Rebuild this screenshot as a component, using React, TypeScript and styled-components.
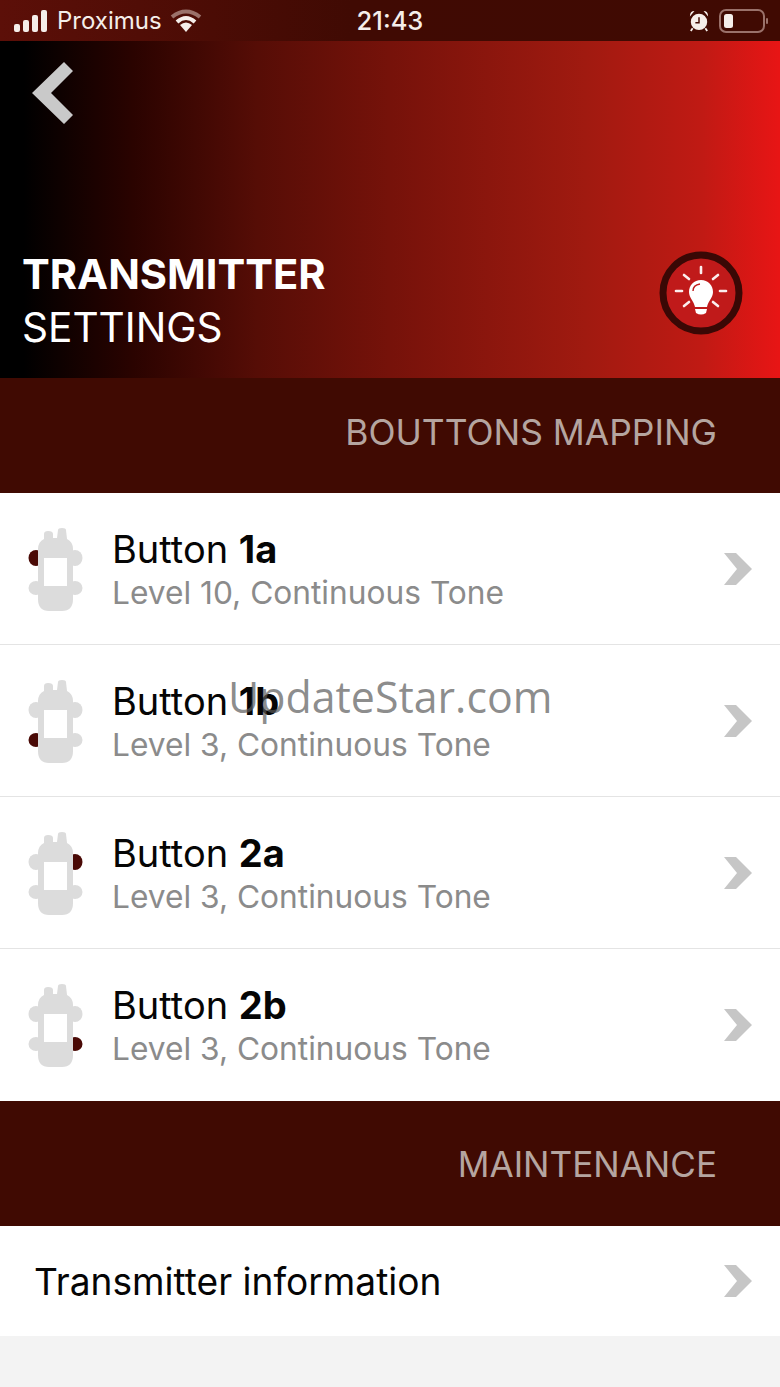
import React, { FC } from "react";
import styled, { createGlobalStyle } from "styled-components";

const GlobalStyle = createGlobalStyle`
  html, body {
    margin: 0;
    padding: 0;
    background: #f3f3f3;
  }
  * {
    box-sizing: border-box;
  }
`;

const Page = styled.div`
  position: relative;
  width: 780px;
  height: 1387px;
  overflow: hidden;
  background: #f3f3f3;
  font-family: Inter, "Liberation Sans", sans-serif;
`;

const StatusBar = styled.div`
  height: 41px;
  display: flex;
  align-items: center;
  justify-content: space-between;
  padding: 0 12px 0 14px;
  background: linear-gradient(90deg, #5c0f08 0%, #400a03 45%, #400a02 100%);
  color: #f5eeea;
`;

const StatusLeft = styled.div`
  width: 298px;
  display: flex;
  align-items: center;
  gap: 8px;
  font-size: 24px;
`;

const StatusTime = styled.div`
  font-size: 25.5px;
  font-weight: 500;
`;

const StatusRight = styled.div`
  width: 300px;
  display: flex;
  align-items: center;
  justify-content: flex-end;
  gap: 10px;
`;

const Hero = styled.div`
  height: 337px;
  display: flex;
  flex-direction: column;
  justify-content: space-between;
  padding: 21px 37px 24px 22px;
  background: linear-gradient(
    90deg,
    #000 0%,
    #000 3%,
    #2a0300 17%,
    #560d06 33%,
    #76120a 50%,
    #a01a10 75%,
    #c01a14 90%,
    #e81515 100%
  );
`;

const BackWrap = styled.div`
  margin-left: 10px;
`;

const HeroBottom = styled.div`
  display: flex;
  align-items: flex-end;
  justify-content: space-between;
`;

const LampWrap = styled.div`
  display: flex;
  margin-bottom: 19px;
`;

const HeroTitle = styled.div`
  color: #fff;
  font-size: 40.6px;
  line-height: 53px;
`;

const HeroStrong = styled.div`
  font-size: 41.6px;
  font-weight: 700;
`;

const Band = styled.div<{ $height: number; $lift: number; $size: number }>`
  height: ${(p) => p.$height}px;
  display: flex;
  align-items: center;
  justify-content: flex-end;
  padding-right: 63px;
  padding-bottom: ${(p) => p.$lift}px;
  background: #400a02;
  color: #b5a5a0;
  font-size: ${(p) => p.$size}px;
`;

const Row = styled.div`
  height: 152px;
  display: flex;
  align-items: center;
  padding: 0 28px;
  background: #fff;
  border-bottom: 1px solid #e4e4e4;
  &:last-child {
    border-bottom: 0;
  }
`;

const RowText = styled.div`
  flex: 1;
  margin-left: 27px;
  padding-top: 3px;
`;

const RowTitle = styled.div`
  color: #050505;
  font-size: 38px;
  line-height: 44px;
  b {
    font-weight: 700;
  }
`;

const RowSub = styled.div`
  color: #8b8b8b;
  font-size: 31.7px;
  line-height: 43px;
`;

const InfoRow = styled.div`
  height: 110px;
  display: flex;
  align-items: center;
  justify-content: space-between;
  padding: 0 28px 0 34px;
  background: #fff;
  color: #050505;
  font-size: 37.1px;
`;

const Watermark = styled.div`
  position: absolute;
  left: 228px;
  top: 671px;
  color: rgba(90, 90, 90, 0.7);
  font-family: "Open Sans", sans-serif;
  font-size: 42.9px;
  line-height: 52px;
`;

type Side = "tl" | "bl" | "tr" | "br";

const Transmitter: FC<{ side: Side }> = ({ side }) => {
  const dark = "#4a0a06";
  const grey = "#dcdcdc";
  return (
    <svg width="57" height="84" viewBox="0 0 57 84">
      <ellipse cx="8" cy="31" rx="7.5" ry="8" fill={side === "tl" ? dark : grey} />
      <ellipse cx="8" cy="61" rx="7.5" ry="7" fill={side === "bl" ? dark : grey} />
      <ellipse cx="47" cy="31" rx="7.5" ry="8" fill={side === "tr" ? dark : grey} />
      <ellipse cx="47" cy="61" rx="7.5" ry="7" fill={side === "br" ? dark : grey} />
      <path
        d="M10 22 Q10 15 16 12 L16 7 Q16 4 20 4 Q25 4 25 7 L25 11 L29 11 L30 3 Q30 1 34 1 Q38 1 38 3 L39 12 Q45 15 45 22 L45 72 Q45 84 34 84 L21 84 Q10 84 10 72 Z"
        fill={grey}
      />
      <rect x="16" y="31" width="23" height="28" fill="#fff" />
    </svg>
  );
};

const Chevron: FC = () => (
  <svg width="28" height="32" viewBox="0 0 28 32">
    <path d="M0 0 L12 0 L28 16 L12 32 L0 32 L13 16 Z" fill="#c6c6c6" />
  </svg>
);

const Signal: FC = () => (
  <svg width="35" height="22" viewBox="0 0 35 22" fill="#f5eeea">
    <rect x="0" y="14" width="6" height="8" rx="2" />
    <rect x="9" y="10" width="6" height="12" rx="2" />
    <rect x="18" y="5" width="6" height="17" rx="2" />
    <rect x="27" y="0" width="6" height="22" rx="2" />
  </svg>
);

const Wifi: FC = () => (
  <svg width="32" height="24" viewBox="0 0 32 24" fill="none">
    <path d="M2 8 Q16 -3 30 8" stroke="#9a716a" strokeWidth="4" />
    <path d="M7 13 Q16 5 25 13" stroke="#f5eeea" strokeWidth="4" />
    <path d="M10 16 Q16 11 22 16 L16 23 Z" fill="#f5eeea" />
  </svg>
);

const Alarm: FC = () => (
  <svg width="20" height="22" viewBox="0 0 22 24" fill="#f5eeea">
    <circle cx="11" cy="13" r="9" />
    <path d="M1 7 Q1 1 6 1 Z M21 7 Q21 1 16 1 Z" />
    <path d="M11 8 L11 14 L7 14" stroke="#400a02" strokeWidth="1.6" fill="none" />
    <path d="M4 20 L2 23 M18 20 L20 23" stroke="#f5eeea" strokeWidth="2" />
  </svg>
);

const Battery: FC = () => (
  <svg width="49" height="24" viewBox="0 0 49 24" fill="none">
    <rect x="1" y="1" width="44" height="22" rx="6" stroke="#9a716a" strokeWidth="2" />
    <rect x="5" y="5" width="9" height="14" rx="2.5" fill="#f5eeea" />
    <rect x="47" y="9" width="2" height="6" rx="1" fill="#9a716a" />
  </svg>
);

const BackArrow: FC = () => (
  <svg width="42" height="62" viewBox="0 0 42 62">
    <path d="M32 0 L41 9 L19 31 L41 53 L32 62 L0 31 Z" fill="#c9c9c9" />
  </svg>
);

const LampButton: FC = () => (
  <svg width="84" height="84" viewBox="0 0 84 84">
    <circle cx="42" cy="42" r="38" fill="#c01a1a" stroke="#3a0805" strokeWidth="7" />
    <g stroke="#fbeeee" strokeWidth="2.6" strokeLinecap="round">
      <path d="M42 16 L42 22" />
      <path d="M25 24 L30 28" />
      <path d="M59 24 L54 28" />
      <path d="M17 40 L23 40" />
      <path d="M61 40 L67 40" />
      <path d="M25 55 L30 51" />
      <path d="M59 55 L54 51" />
    </g>
    <path
      d="M42 29 C35 29 30 34 30 41 C30 47 35 50 36 56 L48 56 C49 50 54 47 54 41 C54 34 49 29 42 29 Z"
      fill="#fff"
    />
    <path d="M36 58 L48 58 L47 62 Q42 65 37 62 Z" fill="#fff" />
    <path d="M34 40 Q34 34 41 33" stroke="#c01a1a" strokeWidth="1.4" fill="none" />
  </svg>
);

const buttons: { name: string; id: string; sub: string; side: Side }[] = [
  { name: "Button", id: "1a", sub: "Level 10, Continuous Tone", side: "tl" },
  { name: "Button", id: "1b", sub: "Level 3, Continuous Tone", side: "bl" },
  { name: "Button", id: "2a", sub: "Level 3, Continuous Tone", side: "tr" },
  { name: "Button", id: "2b", sub: "Level 3, Continuous Tone", side: "br" },
];

const App: FC = () => (
  <Page>
    <GlobalStyle />
    <StatusBar>
      <StatusLeft>
        <Signal />
        <span>Proximus</span>
        <Wifi />
      </StatusLeft>
      <StatusTime>21:43</StatusTime>
      <StatusRight>
        <Alarm />
        <Battery />
      </StatusRight>
    </StatusBar>
    <Hero>
      <BackWrap>
        <BackArrow />
      </BackWrap>
      <HeroBottom>
        <HeroTitle>
          <HeroStrong>TRANSMITTER</HeroStrong>
          SETTINGS
        </HeroTitle>
        <LampWrap>
          <LampButton />
        </LampWrap>
      </HeroBottom>
    </Hero>
    <Band $height={115} $lift={6} $size={35.4}>
      BOUTTONS MAPPING
    </Band>
    <div>
      {buttons.map((button) => (
        <Row key={button.id}>
          <Transmitter side={button.side} />
          <RowText>
            <RowTitle>
              {button.name} <b>{button.id}</b>
            </RowTitle>
            <RowSub>{button.sub}</RowSub>
          </RowText>
          <Chevron />
        </Row>
      ))}
    </div>
    <Band $height={125} $lift={0} $size={35.1}>
      MAINTENANCE
    </Band>
    <InfoRow>
      <span>Transmitter information</span>
      <Chevron />
    </InfoRow>
    <Watermark>UpdateStar.com</Watermark>
  </Page>
);

export default App;
